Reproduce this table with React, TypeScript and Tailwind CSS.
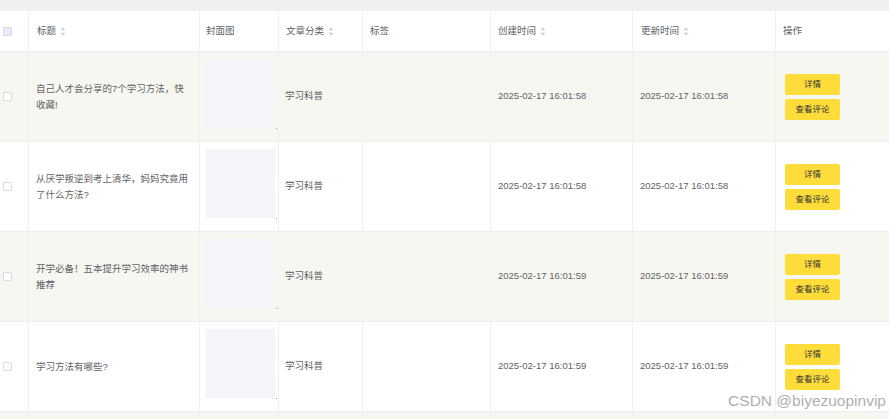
const cols = "grid grid-cols-[28px_171px_79px_84px_128px_142px_143px_114px]";

const rows = [
  { title: "自己人才会分享的7个学习方法，快收藏!", time: "2025-02-17 16:01:58" },
  { title: "从厌学叛逆到考上清华，妈妈究竟用了什么方法?", time: "2025-02-17 16:01:58" },
  { title: "开学必备！五本提升学习效率的神书推荐", time: "2025-02-17 16:01:59" },
  { title: "学习方法有哪些?", time: "2025-02-17 16:01:59" },
];

function Sort() {
  return (
    <svg width="6" height="9" viewBox="0 0 6 9" className="ml-[4px]">
      <path d="M3 0.5 L5.5 3.3 H0.5 Z" fill="#c8cbd2" />
      <path d="M3 8.5 L5.5 5.7 H0.5 Z" fill="#c8cbd2" />
    </svg>
  );
}

function Head({ children, sort }: { children?: React.ReactNode; sort?: boolean }) {
  return (
    <div className="flex items-center border-l border-[#eef0f4] pl-[7px] text-[9.5px] text-[#5c5f66]">
      {children}
      {sort && <Sort />}
    </div>
  );
}

function Btn({ children }: { children: React.ReactNode }) {
  return (
    <div className="flex h-[21px] w-[55px] items-center justify-center rounded-[2px] bg-[#fedd3b] text-[8.5px] text-[#333]">
      {children}
    </div>
  );
}

export default function App() {
  return (
    <div className="relative h-[419px] w-[889px] overflow-hidden bg-white font-['Liberation_Sans','Noto_Sans_CJK_SC',sans-serif]">
      <div className="h-[11px] bg-[#f0f0f0]" />
      <div className={`${cols} h-[41px] border-b border-[#eceef2] bg-white`}>
        <div className="flex items-center pl-[3px]">
          <div className="h-[9px] w-[9px] rounded-[1px] border border-[#d5dae6] bg-[#e7ecf6]" />
        </div>
        <Head sort>
          <span className="pl-[1px]">标题</span>
        </Head>
        <Head>
          <span className="-ml-[1px]">封面图</span>
        </Head>
        <Head sort>文章分类</Head>
        <Head sort={false}>标签</Head>
        <Head sort>创建时间</Head>
        <Head sort>
          <span className="pl-[1px]">更新时间</span>
        </Head>
        <Head>操作</Head>
      </div>

      {rows.map((r, i) => (
        <div
          key={i}
          className={`${cols} h-[90px] border-b border-[#eceef2] text-[9.5px] text-[#606266] ${i % 2 === 0 ? "bg-[#f7f7f1]" : "bg-white"}`}
        >
          <div className="flex items-center pl-[3px]">
            <div className="h-[9px] w-[9px] rounded-[1px] border border-[#d8dbe0] bg-white" />
          </div>
          <div className="flex items-center border-l border-[#eef0f4] pl-[7px]">
            <p className="w-[155px] leading-[16px]">{r.title}</p>
          </div>
          <div className="relative flex items-start border-l border-[#eef0f4] pl-[6px] pt-[7px]">
            <div className="h-[69px] w-[69px] bg-[#f4f5f9]" />
            <div className="absolute left-[76px] top-[76px] h-[1px] w-[1px] bg-[#999]" />
          </div>
          <div className="flex items-center border-l border-[#eef0f4] pl-[6px]">学习科普</div>
          <div className="border-l border-[#eef0f4]" />
          <div className="flex items-center border-l border-[#eef0f4] pl-[7px]">{r.time}</div>
          <div className="flex items-center border-l border-[#eef0f4] pl-[7px]">{r.time}</div>
          <div className="flex flex-col justify-center gap-[4px] border-l border-[#eef0f4] pl-[9px]">
            <Btn>详情</Btn>
            <Btn>查看评论</Btn>
          </div>
        </div>
      ))}

      <div className={`${cols} h-[20px] bg-[#f7f7f1]`}>
        <div />
        <div className="border-l border-[#eef0f4]" />
        <div className="border-l border-[#eef0f4]" />
        <div className="border-l border-[#eef0f4]" />
        <div className="border-l border-[#eef0f4]" />
        <div className="border-l border-[#eef0f4]" />
        <div className="border-l border-[#eef0f4]" />
        <div className="border-l border-[#eef0f4]" />
      </div>

      <div className="absolute right-[3px] top-[392px] text-[15.5px] leading-[18px] text-[#b0b0b0] [text-shadow:0_0_1px_#fff]">
        CSDN @biyezuopinvip
      </div>
    </div>
  );
}
